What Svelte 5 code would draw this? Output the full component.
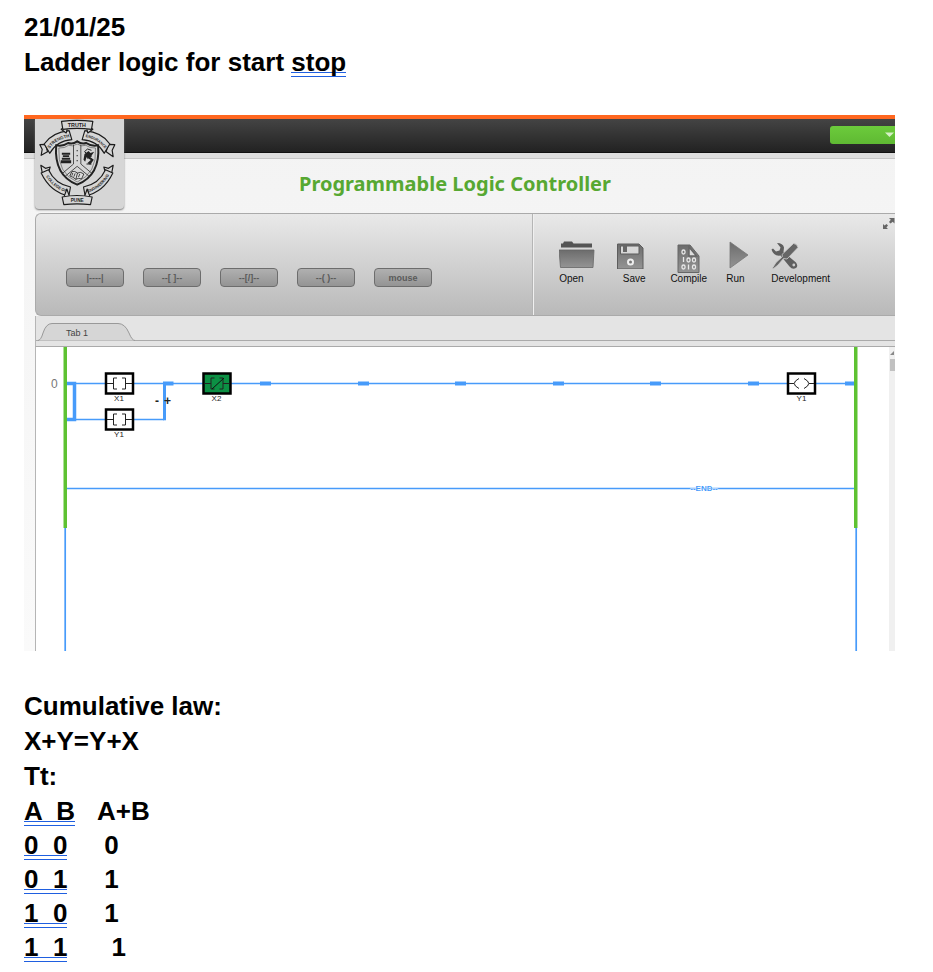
<script>
  const blocks = ['|----|', '--[ ]--', '--[/]--', '--( )--', 'mouse'];

  const rows = [
    { inputs: '0  0', output: ' 0' },
    { inputs: '0  1', output: ' 1' },
    { inputs: '1  0', output: ' 1' },
    { inputs: '1  1', output: '  1' }
  ];

  const joints = [224, 322, 419, 517, 614, 712];
</script>

<main>
  <p>21/01/25</p>
  <h1>Ladder logic for start <span class="marked">stop</span></h1>

  <section class="plc">
    <div class="topbar">
      <button class="account" aria-label="Account menu">
        <svg width="9" height="5" viewBox="0 0 9 5"><path d="M0 0.5H9L4.5 5Z" fill="#d6f0c6" /></svg>
      </button>
    </div>
    <div class="strip"></div>

    <svg class="crest" viewBox="47 42 266 270" role="img" aria-label="College crest">
      <g fill="#d6d6d6" stroke="#1c1c1c" stroke-width="3.5" stroke-linejoin="round">
        <path d="M84 140L65 151L68 133L61 119L78 118Z" />
        <path d="M260 140L281 155L278 136L286 119L267 118Z" />
        <path d="M74 117Q98 82 149 77L157 104Q112 107 91 145Z" />
        <path d="M271 117Q248 82 196 77L188 104Q234 107 254 145Z" />
        <path d="M68 202L64 181L78 190L92 186L86 207Z" />
        <path d="M277 202L281 181L267 190L253 186L259 207Z" />
        <path d="M65 204L87 194Q106 236 153 246L148 273Q92 261 65 204Z" />
        <path d="M280 204L258 194Q239 236 192 246L197 273Q253 261 280 204Z" />
        <path d="M132 68L125 73L140 84L143 73M213 68L220 73L205 84L202 73" />
        <path d="M126 49Q172 43 220 49L216 73Q172 67 130 73Z" />
        <path d="M134 274L142 252L149 272M211 274L203 252L196 272" />
        <path d="M128 276Q172 267 218 276L213 299Q172 294 133 299Z" />
      </g>
      <path d="M110 121Q131 125 146 114Q160 119 173 109Q187 119 200 114Q215 125 236 121Q243 211 173 239Q103 211 110 121Z" fill="#d6d6d6" stroke="#222" stroke-width="6" />
      <path d="M118 129Q136 130 147 121Q160 126 173 117Q187 126 199 121Q211 130 228 129Q233 205 173 231Q113 205 118 129Z" fill="none" stroke="#333" stroke-width="1.5" />
      <path d="M162 119V177L129 205M184 119V177L217 205M173 184L137 214M173 184L209 214" fill="none" stroke="#333" stroke-width="2.5" />
      <g fill="#222">
        <path d="M127 143H152V149H127ZM130 151H149V156H130ZM127 158H152V164H127ZM124 166H155V175H124Z" />
        <circle cx="173" cy="137" r="2" /><circle cx="173" cy="152" r="2" /><circle cx="173" cy="167" r="2" />
        <path d="M195 147L207 138L213 144L224 140L217 151L212 156L223 164L212 179L204 174L214 165L201 157L197 170L192 164Z" />
      </g>
      <path d="M202 146L195 140L204 132L216 136M203 160L217 153M201 177H216" fill="none" stroke="#222" stroke-width="3" />
      <path d="M151 213L157 200Q166 197 174 204Q184 199 193 207L186 222Q178 217 169 223Q160 215 151 213ZM174 204L169 223M160 204L157 212M167 205L163 215M181 207L177 216" fill="#ddd" stroke="#222" stroke-width="2.5" />
      <path id="strength" d="M87 136Q106 102 156 96" fill="none" />
      <path id="endurance" d="M190 95Q237 100 261 138" fill="none" />
      <path id="college" d="M74 205Q101 254 151 265" fill="none" />
      <path id="engineering" d="M197 265Q247 253 273 203" fill="none" />
      <g class="crest-text" text-anchor="middle">
        <text x="172" y="66" font-size="16">TRUTH</text>
        <text x="173" y="292" font-size="14">PUNE</text>
        <text font-size="13"><textPath href="#strength" startOffset="50%">STRENGTH</textPath></text>
        <text font-size="11"><textPath href="#endurance" startOffset="50%">ENDURANCE</textPath></text>
        <text font-size="12"><textPath href="#college" startOffset="50%">COLLEGE OF</textPath></text>
        <text font-size="12"><textPath href="#engineering" startOffset="50%">ENGINEERING</textPath></text>
      </g>
    </svg>

    <h2>Programmable Logic Controller</h2>

    <div class="workspace">
      <div class="toolbar">
        <div class="blocks">
          {#each blocks as block}
            <button>{block}</button>
          {/each}
        </div>
        <div class="tools">
          <button class="open">
            <svg width="36" height="28" viewBox="0 0 36 28">
              <path d="M2 6.500V2.500H4L5 0.500H13L14.500 2.500H33V6.500Z" fill="#555" />
              <path d="M0 9H35L34 26.500H1.500Z" fill="url(#metal)" stroke="#666" stroke-width="0.800" />
            </svg>
            Open
          </button>
          <button class="save">
            <svg width="27" height="28" viewBox="0 0 27 28">
              <path fill-rule="evenodd" d="M0.500 3H22L26 7V28H0.500ZM3.500 5V13H22V5Z" fill="url(#metal)" stroke="#5d5d5d" />
              <path d="M6 4H10V11H6Z" fill="#666" />
              <circle cx="13.500" cy="21" r="2.500" fill="#777" stroke="#eee" stroke-width="2" />
            </svg>
            Save
          </button>
          <button class="compile">
            <svg width="23" height="32" viewBox="0 0 23 32">
              <path d="M1 4H13L22 15V31.500H1Z" fill="url(#metal)" stroke="#666" />
              <path d="M12 6V15H19.500Z" fill="#ddd" stroke="#666" stroke-width="1.500" />
              <g fill="none" stroke="#e8e8e8" stroke-width="1.300">
                <rect x="5" y="9" width="3" height="4" rx="1.500" />
                <path d="M6.500 16V21" />
                <rect x="10" y="17" width="3" height="4" rx="1.500" />
                <rect x="15.500" y="17" width="3" height="4" rx="1.500" />
                <rect x="5" y="24" width="3" height="4" rx="1.500" />
                <path d="M11.500 23.500V28.500" />
                <rect x="15.500" y="24" width="3" height="4" rx="1.500" />
              </g>
            </svg>
            Compile
          </button>
          <button class="run">
            <svg width="22" height="28" viewBox="0 0 22 28"><path d="M4 1L22 14L4 27Z" fill="url(#metal)" stroke="#777" stroke-width="0.800" /></svg>
            Run
          </button>
          <button class="development">
            <svg width="28" height="28" viewBox="0 0 28 28">
              <path d="M6 2Q12 2 13 6.500L12.500 11L25 21.500Q27.500 25 25 27Q21.500 29 18.500 25.500L9.500 14.500Q2.500 15.500 0.500 8.500L2 7.500L5 10.500L8.500 9.500L9.500 6.500Z" fill="#5f5f5f" />
              <circle cx="22.800" cy="24" r="1.400" fill="#ccc" />
              <path d="M22.500 2.500Q26 2.500 27 6.500L16 18L12.500 17.500L7 24L2 28L1.500 27L5 21.500L11.500 15.500L11 13.500Z" fill="#666" stroke="#cfcfcf" stroke-width="0.800" />
            </svg>
            Development
          </button>
        </div>
        <button class="expand" aria-label="Expand">
          <svg width="13" height="13" viewBox="0 0 13 13">
            <path d="M7 1H12.500V6.500L10.700 4.700L8.500 6.500L7 5L8.800 2.800ZM6 12H1V7L2.600 8.600L4.500 7L6 8.500L4.400 10.400Z" fill="#666" />
          </svg>
        </button>
      </div>

      <div class="tabs">
        <button class="tab">
          <svg width="97" height="18" viewBox="0 0 97 18">
            <path d="M0 17.500Q3 17 5 10Q8 0.500 14 0.500H80Q87 0.500 91 10Q94 17.500 97 17.500" fill="#d6d6d6" stroke="#999" />
          </svg>
          <span>Tab 1</span>
        </button>
      </div>

      <div class="editor">
        <svg class="ladder" height="304">
          <defs>
            <linearGradient id="metal" x1="0" y1="0" x2="0" y2="1">
              <stop offset="0" stop-color="#6c6c6c" />
              <stop offset="1" stop-color="#949494" />
            </linearGradient>
            <g id="contact">
              <rect x="1" y="1" width="27" height="20" stroke="#000" stroke-width="2.500" />
              <path d="M2 11H8.500M12 5.500H8.500V16.500H12M17 5.500H20.500V16.500H17M20.500 11H27" fill="none" stroke="#222" />
            </g>
          </defs>
          <g stroke="#479bfa" fill="none">
            <g stroke-width="1.700">
              <path d="M29 36.500H820M29 72.500H128M29 141.500H820" />
              <path d="M29.200 181V304M820.200 181V304" />
            </g>
            <path d="M30 36.500H38.500V72.500H30" stroke-width="3.500" />
            <path d="M128.500 73.300V36.500" stroke-width="3" />
            <path d="M127 36.500H137.500M809 36.500H819" stroke-width="4" />
            {#each joints as x}
              <path d="M{x} 36.500h11" stroke-width="4" />
            {/each}
          </g>
          <g fill="#5ec232">
            <rect x="27.500" y="0" width="3.500" height="181" />
            <rect x="818" y="0" width="3.500" height="181" />
          </g>
          <use href="#contact" x="69" y="25.500" fill="#fff" />
          <use href="#contact" x="69" y="61.500" fill="#fff" />
          <use href="#contact" x="166.500" y="25.500" fill="#0c9044" />
          <path d="M176 42L188 31" stroke="#111" />
          <rect x="752" y="26.500" width="27" height="20" fill="#fff" stroke="#000" stroke-width="2.500" />
          <path d="M753 36.500H758M763 31.500Q753.500 36.500 763 41.500M768 31.500Q777.500 36.500 768 41.500M773 36.500H778" fill="none" stroke="#222" />
          <g class="names" text-anchor="middle">
            <text x="83" y="54">X1</text>
            <text x="83" y="90">Y1</text>
            <text x="180.500" y="54">X2</text>
            <text x="765.500" y="54">Y1</text>
          </g>
          <text class="end" x="668" y="144" text-anchor="middle">--END--</text>
          <text class="index" x="15" y="41">0</text>
          <text class="sign" x="119" y="58">-</text>
          <text class="sign" x="128" y="58">+</text>
        </svg>
        <div class="scrollbar">
          <svg width="5" height="5" viewBox="0 0 5 5"><path d="M1 4L5 0V4Z" fill="#888" /></svg>
          <div class="thumb"></div>
        </div>
      </div>
    </div>
  </section>

  <p>Cumulative law:</p>
  <p>X+Y=Y+X</p>
  <p>Tt:</p>
  <table>
    <thead>
      <tr><th><span class="marked">A  B</span></th><th>A+B</th></tr>
    </thead>
    <tbody>
      {#each rows as row}
        <tr><td><span class="marked">{row.inputs}</span></td><td>{row.output}</td></tr>
      {/each}
    </tbody>
  </table>
</main>

<style>
  :global(body) {
    background: #fff;
  }

  main {
    padding: 10px 38px 6px 24px;
    font: bold 26px/35px 'Liberation Sans', Arial, sans-serif;
    color: #000;
  }

  p,
  h1 {
    margin: 0;
    font: inherit;
  }

  .marked {
    display: inline-block;
    line-height: 29px;
    background:
      linear-gradient(#1f5fe0, #1f5fe0) 0 100% / 100% 1px no-repeat,
      linear-gradient(#1f5fe0, #1f5fe0) 0 calc(100% - 4px) / 100% 1px no-repeat;
  }

  button {
    padding: 0;
    border: 0;
    background: none;
    font-family: inherit;
    color: inherit;
    cursor: pointer;
  }

  svg {
    display: block;
  }

  .plc {
    position: relative;
    margin: 35px 0 38px;
    overflow: hidden;
    background: linear-gradient(#f3f3f3, #fafafa);
  }

  .topbar {
    display: flex;
    justify-content: flex-end;
    align-items: flex-start;
    box-sizing: border-box;
    height: 38px;
    padding-top: 7px;
    border-top: 4px solid #ff671f;
    border-bottom: 1px solid #111;
    background: linear-gradient(#444, #222);
  }

  .account {
    display: flex;
    justify-content: flex-end;
    box-sizing: border-box;
    width: 65px;
    height: 18px;
    padding: 6px 1px 0 0;
    border-radius: 3px 0 0 3px;
    background: linear-gradient(#6ccb3c, #5fb933);
  }

  .strip {
    height: 5px;
    border-bottom: 1px solid #c6c6c6;
    background: #dedede;
  }

  .crest {
    position: absolute;
    top: 4px;
    left: 11px;
    width: 89px;
    height: 90px;
    border-radius: 0 0 4px 4px;
    background: #d6d6d6;
    box-shadow: 0 1px 2px #777;
  }

  .crest-text {
    font-family: 'Liberation Sans', Arial, sans-serif;
    font-weight: bold;
    fill: #222;
  }

  h2 {
    margin: 0;
    padding: 11px 9px 15px 0;
    font: bold 20px/28px 'Noto Sans', sans-serif;
    text-align: center;
    color: #57a832;
  }

  .workspace {
    margin-left: 11px;
  }

  .toolbar {
    position: relative;
    display: flex;
    height: 101px;
    border: 1px solid #aaa;
    border-right: 0;
    border-radius: 6px 0 0 6px;
    background: linear-gradient(#e9e9e9, #b9b9b9);
  }

  .blocks {
    display: flex;
    flex: 0 0 58%;
    gap: 19px;
    align-items: flex-start;
    box-sizing: border-box;
    padding: 54px 0 0 30px;
    border-right: 1px solid #f0f0f0;
    box-shadow: inset -1px 0 #b5b5b5;
  }

  .blocks button {
    width: 58px;
    height: 19px;
    border: 1px solid #6d6d6d;
    border-radius: 4px;
    background: linear-gradient(#b0b0b0, #949494);
    font-size: 9px;
    font-weight: bold;
    color: #5a5a5a;
  }

  .tools {
    display: flex;
    gap: 19px;
    align-items: flex-start;
    padding: 27px 0 0 25px;
  }

  .tools button {
    display: flex;
    flex-direction: column;
    gap: 4px;
    font-size: 10px;
    line-height: 12px;
    text-align: left;
    color: #111;
  }

  .tools .open {
    width: 39px;
  }

  .tools .save {
    width: 34px;
    align-items: center;
  }

  .save svg {
    align-self: flex-start;
  }

  .tools .compile {
    width: 37px;
    gap: 0;
    align-items: center;
  }

  .tools .run {
    width: 26px;
  }

  .expand {
    position: absolute;
    top: 3px;
    right: 0;
  }

  .tabs {
    height: 31px;
    box-sizing: border-box;
    padding: 7px 0 0 2px;
    background: linear-gradient(#aaa, #aaa) 0 24px / 100% 1px no-repeat #e4e4e4;
    border-bottom: 1px solid #aaa;
    border-left: 1px solid #b5b5b5;
  }

  .tab {
    display: grid;
    align-items: center;
    font-size: 9px;
    line-height: 20px;
    color: #444;
  }

  .tab > * {
    grid-area: 1 / 1;
  }

  .tab svg {
    align-self: start;
  }

  .tab span {
    padding-left: 28px;
    text-align: left;
  }

  .editor {
    display: flex;
    border-left: 1px solid #b5b5b5;
    background: #fff;
  }

  .ladder {
    flex: 1;
    min-width: 0;
    font-family: 'Liberation Sans', Arial, sans-serif;
    font-weight: normal;
  }

  .names {
    font-size: 8px;
    fill: #222;
  }

  .end {
    font-size: 8px;
    fill: #479bfa;
    stroke: #fff;
    stroke-width: 1px;
    paint-order: stroke;
    font-weight: bold;
  }

  .index {
    font-size: 12px;
    fill: #777;
  }

  .sign {
    font-size: 12px;
    font-weight: bold;
    fill: #222;
  }

  .scrollbar {
    width: 6px;
    padding-top: 4px;
    background: #f0f0f0;
  }

  .thumb {
    height: 12px;
    margin: 3px 0 0 1px;
    background: #c1c1c1;
  }

  table {
    border-collapse: collapse;
    line-height: 34px;
    white-space: pre;
  }

  th,
  td {
    padding: 0 22px 0 0;
    text-align: left;
    font-weight: bold;
  }
</style>
